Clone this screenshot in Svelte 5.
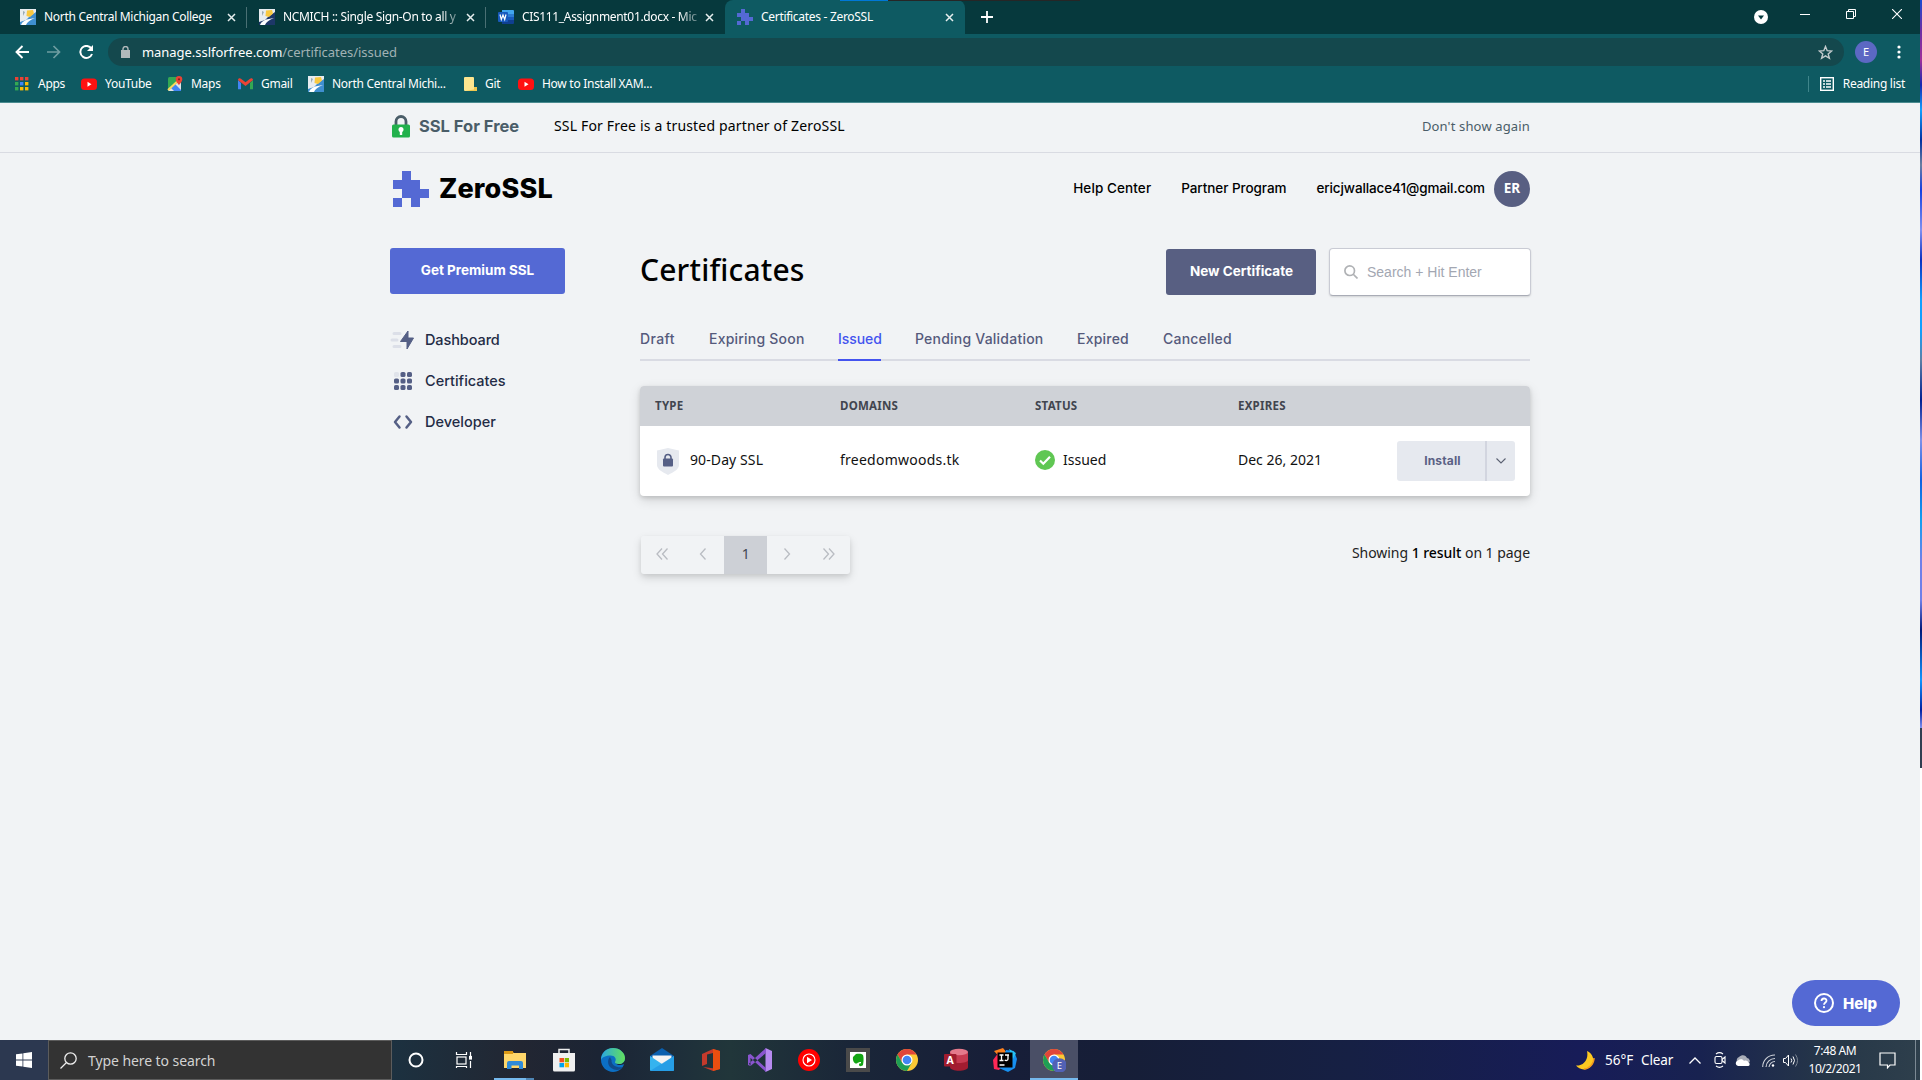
<script>
  const tabs = [
    { title: 'North Central Michigan College', icon: 'nc' },
    { title: 'NCMICH :: Single Sign-On to all y', icon: 'nc2' },
    { title: 'CIS111_Assignment01.docx - Mic', icon: 'word' },
    { title: 'Certificates - ZeroSSL', icon: 'zero', active: true }
  ];
  const bookmarks = [
    { label: 'Apps', icon: 'apps', w: 66 },
    { label: 'YouTube', icon: 'yt', w: 86 },
    { label: 'Maps', icon: 'maps', w: 71 },
    { label: 'Gmail', icon: 'gmail', w: 70 },
    { label: 'North Central Michi...', icon: 'nc', w: 156 },
    { label: 'Git', icon: 'folder', w: 54 },
    { label: 'How to Install XAM...', icon: 'yt', w: 150 }
  ];
  const filters = [
    { label: 'Draft', w: 35 },
    { label: 'Expiring Soon', w: 95 },
    { label: 'Issued', w: 43, active: true },
    { label: 'Pending Validation', w: 128 },
    { label: 'Expired', w: 52 },
    { label: 'Cancelled', w: 69 }
  ];
  const apps = ['cortana', 'tasks', 'explorer', 'store', 'edge', 'mail', 'office', 'vs', 'ytm', 'evernote', 'chrome', 'access', 'ij', 'chromeE'];
  const appColors = ['#ea4335', '#ea4335', '#ea4335', '#34a853', '#4285f4', '#fbbc05', '#34a853', '#fbbc05', '#fbbc05'];
</script>

{#snippet icon(name)}
  {#if name === 'nc' || name === 'nc2'}
    <svg width="16" height="16" viewBox="0 0 16 16"><rect width="16" height="16" fill={name === 'nc' ? '#3f8fd0' : '#1d3768'} /><path d="M0 0h16v3L9 8l-3 3-6 2z" fill="#e7ecf0" /><path d="M7 1.500l6-.5 1 3.500L10 8 6.500 7z" fill="#f8c840" /><path d="M1 16c1-3 3-4 6-5.500l8-1.500c-5 2-8 4-9 7z" fill="#fff" /><path d="M3 2l2 1-2 4z" fill="#9aabb5" /></svg>
  {:else if name === 'word'}
    <svg width="16" height="16" viewBox="0 0 16 16"><path d="M4 1h11a1 1 0 0 1 1 1v3H4z" fill="#41a5ee" /><path d="M4 5h12v3H4z" fill="#2b7cd3" /><path d="M4 8h12v3H4z" fill="#185abd" /><path d="M4 11h12v3a1 1 0 0 1-1 1H4z" fill="#103f91" /><rect y="3" width="10" height="10" rx="1" fill="#185abd" /><path d="M2 5.500l1.300 5L5 6l1.700 4.500 1.300-5" fill="none" stroke="#fff" stroke-width="1.200" /></svg>
  {:else if name === 'zero'}
    <svg width="16" height="16" viewBox="0 0 4 4" shape-rendering="crispEdges"><path d="M1 0h1v1h1v1h1v1H3v1H2V3H1V2H0V1h1zM0 3h1v1H0z" fill="#5469d4" /></svg>
  {:else if name === 'apps'}
    <svg width="14" height="14" viewBox="0 0 14 14">{#each appColors as c, i}<rect x={(i % 3) * 5} y={Math.floor(i / 3) * 5} width="3.400" height="3.400" fill={c} />{/each}</svg>
  {:else if name === 'yt'}
    <svg width="16" height="16" viewBox="0 0 16 16"><rect y="2.500" width="16" height="11.500" rx="3.500" fill="#f11" /><path d="M6.500 5.800v5l4-2.500z" fill="#fff" /></svg>
  {:else if name === 'maps'}
    <svg width="16" height="16" viewBox="0 0 16 16"><rect x="1" y="1" width="13" height="14" rx="1.500" fill="#34a853" /><path d="M1 15L14 3v12z" fill="#dfe3e6" /><path d="M8 8l6 6v1H7L4 12z" fill="#4285f4" /><path d="M1 14L13 3" stroke="#fbd75b" stroke-width="2" /><path d="M12 0a3.300 3.300 0 0 1 3.300 3.300C15.300 6 12 9 12 9S8.700 6 8.700 3.300A3.300 3.300 0 0 1 12 0z" fill="#ea4335" /><circle cx="12" cy="3.300" r="1.100" fill="#8c1d18" /></svg>
  {:else if name === 'gmail'}
    <svg width="15" height="12" viewBox="0 0 15 12"><path d="M0 2v9.200h3V5z" fill="#4285f4" /><path d="M15 2v9.200h-3V5z" fill="#34a853" /><path d="M0 2c0-2 2-2.200 3-1.300l4.500 3.600L12 .700c1-.900 3-.700 3 1.300l-7.500 6z" fill="#ea4335" /></svg>
  {:else if name === 'folder'}
    <svg width="13" height="16" viewBox="0 0 13 16"><path d="M1 1h8a1 1 0 0 1 1 1v9h2v4H1a1 1 0 0 1-1-1V2a1 1 0 0 1 1-1z" fill="#fde68f" /><path d="M1 15h12v-4h-3v2.500" fill="#efc84f" /></svg>
  {:else if name === 'cortana'}
    <svg width="24" height="24" viewBox="0 0 24 24"><circle cx="12" cy="12" r="6.500" fill="none" stroke="#fff" stroke-width="2" /></svg>
  {:else if name === 'tasks'}
    <svg width="24" height="24" viewBox="0 0 24 24" fill="none" stroke="#fff" stroke-width="1.200"><rect x="5" y="9" width="9" height="7" /><path d="M4.500 4v2.500h10V4M4.500 20v-1.500h10V20M18.500 4v4M18.500 13v7" /><rect x="17.600" y="8.500" width="1.800" height="2.500" fill="#fff" /></svg>
  {:else if name === 'explorer'}
    <svg width="24" height="24" viewBox="0 0 24 24"><path d="M1 3h8l2 2H1z" fill="#e8a317" /><path d="M1 5h22v15H1z" fill="#ffd76a" /><path d="M1 3h9v3H1z" fill="#dc9a16" /><path d="M4 21v-6a2 2 0 0 1 2-2h12a2 2 0 0 1 2 2v6h-4v-3.500H8.500V21z" fill="#2f8bd8" /></svg>
  {:else if name === 'store'}
    <svg width="24" height="24" viewBox="0 0 24 24"><path d="M7 7V1.500h10V7" fill="none" stroke="#eee" stroke-width="1.500" /><path d="M1 5h22v17a1.500 1.500 0 0 1-1.500 1.500h-19A1.500 1.500 0 0 1 1 22z" fill="#f0f0f0" /><path d="M7.500 10H12v4.300H7.500z" fill="#f25022" /><path d="M12.700 10H17v4.300h-4.300z" fill="#7fba00" /><path d="M7.500 15H12v4.300H7.500z" fill="#00a4ef" /><path d="M12.700 15H17v4.300h-4.300z" fill="#ffb900" /></svg>
  {:else if name === 'edge'}
    <svg width="24" height="24" viewBox="0 0 24 24"><defs><linearGradient id="eg" x1="0" x2="1"><stop stop-color="#2aa7e0" /><stop offset="1" stop-color="#63e05c" /></linearGradient></defs><path d="M0 12C0 5 5 0 12 0s12 5 12 10c0 4-3 6-6 6-2 0-4-.6-4-1.500 2 3 6 3.300 9 1.500-1 4-5 8-11 8S0 19 0 12z" fill="#0c6fc4" /><path d="M0 12C0 5 5 0 12 0s12 5 12 10c0 4-3 6-6 6-2.500 0-4.500-.800-4-2 2-3 0-6.500-4.500-6.500C5 7.500 1 9 0 12z" fill="url(#eg)" /><path d="M9 9c-3 3-3 10 4 12.500 4 1 7 0 8.500-2.500C17 20 10 18 10.500 12z" fill="#114a8b" /></svg>
  {:else if name === 'mail'}
    <svg width="24" height="24" viewBox="0 0 24 24"><path d="M0 8l12-8 12 8v6H0z" fill="#0a5fae" /><path d="M2.500 7.500h19V16h-19z" fill="#f3f3f3" /><path d="M0 8l12 8 12-8v14a1 1 0 0 1-1 1H1a1 1 0 0 1-1-1z" fill="#35b3ef" /><path d="M0 23L24 8v15z" fill="#1d8fe0" opacity=".6" /></svg>
  {:else if name === 'office'}
    <svg width="24" height="24" viewBox="0 0 24 24"><path d="M3 6l11-5 7 2v18l-7 2-10-4 10 1.300V5L8 6.500V16l-5 2z" fill="#c43a2c" /><path d="M14 1l7 2v18l-7 2z" fill="#ea4e10" /></svg>
  {:else if name === 'vs'}
    <svg width="24" height="24" viewBox="0 0 24 24"><path d="M17.500 0L24 3v18l-6.500 3z" fill="#b78af0" /><path d="M2.500 6L18 20v4L1 8.500zM2.500 18L18 5V0L1 15.500zM0 7l2.500-1v12L0 17z" fill="#8a55cf" /></svg>
  {:else if name === 'ytm'}
    <svg width="24" height="24" viewBox="0 0 24 24"><circle cx="12" cy="12" r="11" fill="#f00" /><circle cx="12" cy="12" r="6" fill="none" stroke="#fff" stroke-width="1.100" /><path d="M10 8.700v6.600l5-3.300z" fill="#fff" /></svg>
  {:else if name === 'evernote'}
    <svg width="24" height="24" viewBox="0 0 24 24"><path d="M0 0h24v24H0z" fill="#4a4a4a" /><path d="M4 4h16v16H4z" fill="#fff" /><path d="M7 9l3-3c3-.5 6-.3 7 1 1 3 .5 8 0 10-1 1.500-4 1.500-4 0 0-1.500 1-2 2-1.500V14c-2 0-3 .5-4 1.500-3 .5-4.500-3-4-6.500z" fill="#14a514" /></svg>
  {:else if name === 'chrome' || name === 'chromeE'}
    <svg width="24" height="24" viewBox="0 0 24 24"><circle cx="12" cy="12" r="11" fill="#fcc934" /><path d="M2.500 6.500A11 11 0 0 1 21.500 6.500H12L7.200 14.800z" fill="#e0463a" /><path d="M2.500 6.500A11 11 0 0 0 12 23l4.800-8.200-9.600 0z" fill="#1e9e55" /><circle cx="12" cy="12" r="5.500" fill="#fff" /><circle cx="12" cy="12" r="4.300" fill="#4285f4" />{#if name === 'chromeE'}<circle cx="17.500" cy="17.500" r="7.300" fill="#5261b5" /><text x="17.500" y="21" font-size="9.500" fill="#fff" text-anchor="middle">E</text>{/if}</svg>
  {:else if name === 'access'}
    <svg width="24" height="24" viewBox="0 0 24 24"><path d="M6 4v15c0 5 18 5 18 0V4z" fill="#a31c30" /><path d="M6 4v8c0 4 18 4 18 0V4z" fill="#c73a50" /><ellipse cx="15" cy="4" rx="9" ry="3.200" fill="#e5798b" /><rect y="6" width="12.500" height="12.500" rx="1" fill="#a11c2e" /><text x="6.200" y="16" font-size="10.500" font-weight="700" fill="#fff" text-anchor="middle">A</text></svg>
  {:else if name === 'ij'}
    <svg width="24" height="24" viewBox="0 0 24 24"><path d="M1 3l9-3 4 5-4 8z" fill="#fc801d" /><path d="M0 12l6-8 5 12-5 6-5-1z" fill="#fe2857" /><path d="M13 2l8 1 3 8-2 9-7 4-9-4z" fill="#1790f0" /><path d="M16 1l7 4-3 6z" fill="#26c3f5" /><rect x="4.500" y="4.500" width="15" height="15" fill="#000" /><path d="M6.500 7h4M8.500 7v5.500M6.500 12.500h4M12 7h4M15 7v4c0 1.500-2 2-3.300 1M6.500 17h5" stroke="#fff" stroke-width="1.300" fill="none" /></svg>
  {/if}
{/snippet}

{#snippet close()}
  <svg class="close" width="9" height="9" viewBox="0 0 9 9"><path d="M1 1l7 7M8 1L1 8" stroke="#e6eeee" stroke-width="1.500" /></svg>
{/snippet}

<div class="screen">
  <div class="window">
    <header class="browser">
      <div class="tabstrip">
        {#each tabs as t}
          <div class="tab {t.icon}" class:active={t.active}>
            {@render icon(t.icon)}
            <span class="title">{t.title}</span>
            {@render close()}
          </div>
        {/each}
        <svg class="plus" width="12" height="12" viewBox="0 0 12 12"><path d="M6 0v12M0 6h12" stroke="#fff" stroke-width="1.800" /></svg>
        <div class="controls">
          <svg width="14" height="14" viewBox="0 0 14 14"><circle cx="7" cy="7" r="7" fill="#fff" /><path d="M4 5.500h6L7 9.500z" fill="#06393d" /></svg>
          <svg width="10" height="10" viewBox="0 0 10 10"><path d="M0 5.500h10" stroke="#fff" /></svg>
          <svg width="10" height="10" viewBox="0 0 10 10" fill="none" stroke="#fff"><path d="M.500 2.500h7v7h-7zM2.500 2V.500h7v7H8" /></svg>
          <svg width="10" height="10" viewBox="0 0 10 10"><path d="M0 0l10 10M10 0L0 10" stroke="#fff" stroke-width="1.100" /></svg>
        </div>
      </div>
      <div class="toolbar">
        <svg width="14" height="14" viewBox="0 0 14 14" fill="none" stroke="#fff" stroke-width="1.900"><path d="M14 7H1.500M7.500 1L1.500 7l6 6" /></svg>
        <svg width="14" height="14" viewBox="0 0 14 14" fill="none" stroke="#6f9da1" stroke-width="1.700"><path d="M0 7h12.500M6.500 1l6 6-6 6" /></svg>
        <svg width="15" height="14" viewBox="0 0 15 14"><path d="M12.500 3.800A6 6 0 1 0 13 9" fill="none" stroke="#fff" stroke-width="2" /><path d="M14 0v6H8z" fill="#fff" /></svg>
        <div class="omnibox">
          <svg width="9" height="12" viewBox="0 0 9 12"><path d="M0 4h9v8H0z" fill="#b1b9bb" /><path d="M2 5V3a2.500 2.500 0 0 1 5 0v2" fill="none" stroke="#b1b9bb" stroke-width="1.400" /></svg>
          <span class="url">manage.sslforfree.com<i>/certificates/issued</i></span>
          <svg class="star" width="15" height="15" viewBox="0 0 15 15"><path d="M7.500 1.500l1.700 4.200 4.500.300-3.500 2.900 1.200 4.400-3.900-2.500-3.900 2.500 1.200-4.400L1.300 6l4.500-.300z" fill="none" stroke="#c3cbcd" stroke-width="1.400" /></svg>
        </div>
        <div class="profile">E</div>
        <svg width="4" height="14" viewBox="0 0 4 14" fill="#fff"><circle cx="2" cy="2" r="1.600" /><circle cx="2" cy="7" r="1.600" /><circle cx="2" cy="12" r="1.600" /></svg>
      </div>
      <div class="bookmarks">
        {#each bookmarks as b}
          <div class="bookmark" style:width="{b.w}px">{@render icon(b.icon)}<span>{b.label}</span></div>
        {/each}
        <div class="reading">
          <svg width="14" height="14" viewBox="0 0 14 14"><rect x=".7" y=".7" width="12.600" height="12.600" fill="none" stroke="#fff" stroke-width="1.400" /><path d="M3 4h2M3 7h2M3 10h2M6 4h5M6 7h5M6 10h5" stroke="#fff" stroke-width="1.600" /></svg>
          <span>Reading list</span>
        </div>
      </div>
    </header>

    <div class="partner">
      <div class="container">
        <svg width="18" height="23" viewBox="0 0 18 23"><path d="M4 11V6.500a5 5 0 0 1 10 0V11" fill="none" stroke="#4a5d68" stroke-width="2.800" /><rect y="9.500" width="18" height="13" rx="1.500" fill="#22b14c" /><circle cx="9" cy="14.500" r="2.500" fill="#fff" /><path d="M7.800 15h2.400v5H7.800z" fill="#fff" /></svg>
        <b>SSL For Free</b>
        <span class="msg">SSL For Free is a trusted partner of ZeroSSL</span>
        <span class="dismiss">Don't show again</span>
      </div>
    </div>

    <div class="container top">
      <svg width="36" height="36" viewBox="0 0 4 4" shape-rendering="crispEdges"><path d="M1 0h1v1h1v1h1v1H3v1H2V3H1V2H0V1h1zM0 3h1v1H0z" fill="#5469d4" /></svg>
      <span class="brand">ZeroSSL</span>
      <nav>
        <span class="help-center">Help Center</span>
        <span class="program">Partner Program</span>
        <span class="email">ericjwallace41@gmail.com</span>
        <span class="avatar">ER</span>
      </nav>
    </div>

    <div class="container body">
      <aside>
        <button class="premium">Get Premium SSL</button>
        <div class="side">
          <svg width="25" height="20" viewBox="0 0 25 20"><path d="M4 3.500h6M2 10h5M4 16.500h6" stroke="#dcdfe8" stroke-width="3" stroke-linecap="round" /><path d="M18 1v7h5.500L17 19v-7.500h-6.500z" fill="#555f85" stroke="#555f85" stroke-linejoin="round" /></svg>
          <span>Dashboard</span>
        </div>
        <div class="side">
          <svg width="25" height="20" viewBox="0 0 25 20">{#each Array(9) as _, i}<rect x={4 + (i % 3) * 6.500} y={1 + Math.floor(i / 3) * 6.500} width="5" height="5" rx="1.600" fill={i ? '#555f85' : '#e0e3ea'} />{/each}</svg>
          <span>Certificates</span>
        </div>
        <div class="side">
          <svg width="25" height="20" viewBox="0 0 25 20"><path d="M9.500 4.500L5 10l4.500 5.500M16.500 4.500L21 10l-4.500 5.500" fill="none" stroke="#555f85" stroke-width="2.500" stroke-linecap="round" stroke-linejoin="round" /></svg>
          <span>Developer</span>
        </div>
      </aside>

      <main>
        <div class="head">
          <h1>Certificates</h1>
          <button class="new">New Certificate</button>
          <div class="search">
            <svg width="14" height="14" viewBox="0 0 14 14" fill="none" stroke="#b0b2b5" stroke-width="1.700"><circle cx="5.700" cy="5.700" r="4.800" /><path d="M9 9l4.500 4.500" /></svg>
            <span>Search + Hit Enter</span>
          </div>
        </div>
        <div class="filters">
          {#each filters as f}
            <div class="filter" class:active={f.active} style:width="{f.w}px">{f.label}</div>
          {/each}
        </div>
        <div class="table">
          <div class="row thead"><span>TYPE</span><span>DOMAINS</span><span>STATUS</span><span>EXPIRES</span></div>
          <div class="row entry">
            <span class="cell">
              <svg class="shield" width="22" height="27" viewBox="0 0 22 27"><path d="M11 0l11 2.500V17c0 4-5 7-11 10C5 24 0 21 0 17V2.500z" fill="#e6e9ef" /><rect x="6" y="10.500" width="10" height="8" rx="1" fill="#555f85" /><path d="M8 11V9.500a3 3 0 0 1 6 0V11" fill="none" stroke="#555f85" stroke-width="1.600" /></svg>
              <span class="kind">90-Day SSL</span>
            </span>
            <span class="cell domain">freedomwoods.tk</span>
            <span class="cell">
              <svg class="check" width="20" height="20" viewBox="0 0 20 20"><circle cx="10" cy="10" r="10" fill="#60c753" /><path d="M5 10.500l3.300 3.300L15 6.800" fill="none" stroke="#fff" stroke-width="2.200" /></svg>
              <span class="state">Issued</span>
            </span>
            <span class="cell date">Dec 26, 2021</span>
            <span class="actions"><span class="install">Install</span><span class="drop"><svg width="10" height="6" viewBox="0 0 10 6"><path d="M.5.500L5 5 9.500.500" fill="none" stroke="#5c6273" stroke-width="1.100" /></svg></span></span>
          </div>
        </div>
        <div class="footer">
          <div class="pages">
            <span><svg width="12" height="12" viewBox="0 0 12 12"><path d="M6 .500L1 6l5 5.500M11.500.500l-5 5.500 5 5.500" /></svg></span>
            <span><svg width="12" height="12" viewBox="0 0 12 12"><path d="M8.500.500L3.500 6l5 5.500" /></svg></span>
            <span class="current">1</span>
            <span><svg width="12" height="12" viewBox="0 0 12 12"><path d="M3.500.500l5 5.500-5 5.500" /></svg></span>
            <span><svg width="12" height="12" viewBox="0 0 12 12"><path d="M.500.500l5 5.500-5 5.500M6 .500L11 6l-5 5.500" /></svg></span>
          </div>
          <div class="count">Showing <b>1 result</b> on 1 page</div>
        </div>
      </main>
    </div>

    <div class="helper">
      <svg width="20" height="20" viewBox="0 0 20 20"><circle cx="10" cy="10" r="9" fill="none" stroke="#fff" stroke-width="2" /><path d="M7.500 8c0-3.300 5-3.300 5-.3 0 1.800-2.500 1.800-2.500 4" fill="none" stroke="#fff" stroke-width="1.800" /><circle cx="10" cy="14.200" r="1.100" fill="#fff" /></svg>
      <span>Help</span>
    </div>
    <div class="accent"></div>

    <footer class="taskbar">
      <div class="start"><svg width="16" height="16" viewBox="0 0 16 16" fill="#fff"><path d="M0 2.300l6.500-.9v6.200H0zM7.300 1.300L16 0v7.600H7.300zM0 8.400h6.500v6.200L0 13.700zM7.300 8.400H16V16l-8.700-1.300z" /></svg></div>
      <div class="find"><svg width="17" height="17" viewBox="0 0 17 17" fill="none" stroke="#eee" stroke-width="1.300"><circle cx="10.500" cy="6.500" r="5.700" /><path d="M6.500 10.500L.5 16.500" /></svg><span>Type here to search</span></div>
      {#each apps as a}
        <div class="app {a}">{@render icon(a)}</div>
      {/each}
      <div class="tray">
        <svg class="moon" width="19" height="19" viewBox="0 0 19 19"><path d="M11 0a9.500 9.500 0 1 1-11 14.500C7 15 13 9 11 0z" fill="#fdc921" /><path d="M18 7c0 6-5 11-10 11" stroke="#f29a1f" stroke-width="1.500" fill="none" /></svg>
        <span class="temp">56°F</span>
        <span class="sky">Clear</span>
        <svg class="up" width="12" height="7" viewBox="0 0 12 7"><path d="M.500 6.500L6 1l5.500 5.500" fill="none" stroke="#fff" stroke-width="1.300" /></svg>
        <svg class="meet" width="12" height="16" viewBox="0 0 12 16" fill="none" stroke="#fff" stroke-width="1.100"><rect x="1" y="4.500" width="7" height="7" rx="1.500" /><path d="M8 7.500L11 5v6L8 8.500M2 2c2-1.500 5-1.500 7 0M2 14c2 1.500 5 1.500 7 0" /></svg>
        <svg class="cloud" width="16" height="11" viewBox="0 0 16 11"><path d="M3 8a3.500 3.500 0 0 1 1-6c3-3 7-2 8 1a3 3 0 0 1 2 5z" fill="#a9adb8" /><path d="M3 11a2.800 2.800 0 0 1 0-5.500c2-2 5-1.500 6 .5 2-1 4 0 4.300 1.500a1.800 1.800 0 0 1 0 3.500z" fill="#fff" /></svg>
        <svg class="wifi" width="13" height="13" viewBox="0 0 13 13" fill="none" stroke="#cfd3da" stroke-width="1.100"><path d="M.700 13A12 12 0 0 1 13 1M4 13a9 9 0 0 1 9-8.500M7 13a6 6 0 0 1 6-5.500" /><circle cx="11" cy="11.500" r="1.200" fill="#fff" stroke="none" /></svg>
        <svg class="volume" width="16" height="13" viewBox="0 0 16 13" fill="none" stroke="#fff"><path d="M.500 4.500h2l3-3.500v11l-3-3.500h-2zM8 4.500q1.500 2 0 4M10 2.500q3 4 0 8" /><path d="M12.500.500q4 6 0 12" stroke="#7d8794" /></svg>
        <div class="clock"><span>7:48 AM</span><span class="day">10/2/2021</span></div>
        <svg class="notes" width="17" height="17" viewBox="0 0 17 17" fill="none" stroke="#fff" stroke-width="1.200"><path d="M1 1h15v12h-5l-2.500 2.800V13H1z" /></svg>
      </div>
      <div class="peek"></div>
    </footer>
  </div>
  <div class="edge-strip"><div class="glow"></div><div class="dark"></div></div>
</div>

<style>
  :global(body) { margin: 0; overflow: hidden; }
  * { box-sizing: border-box; }
  svg { display: block; flex: none; }
  button { border: 0; padding: 0; }
  .screen { display: flex; width: 1922px; height: 1080px; background: #fff; font-family: 'Noto Sans', sans-serif; white-space: nowrap; overflow: hidden; }
  .window { position: relative; display: flex; flex-direction: column; width: 1920px; height: 1080px; background: #f1f3f5; }
  .edge-strip { width: 2px; }
  .glow { height: 728px; background: linear-gradient(#1b4ad0, #6a2fa5 30px, #a02f9a 60px, #1428b0 85px, #12a0ff 110px, #0030a0 140px, #6b7fa0 165px, #1540e0 190px, #8090f0 230px, #0a30c0 260px, #10a0ff 300px, #10a0ff 330px, #5d80a5 360px, #002090 400px, #7e90e8 440px, #1060e0 480px, #10a0f0 520px, #7080e8 560px, #7080e8 600px, #001878 630px, #1095ff 680px, #0020a0 710px, #8090f0); }
  .dark { height: 40px; background: #303e50; }

  .browser { height: 103px; background: #0e5a62; border-bottom: 1px solid #4a8b90; color: #fff; }
  .tabstrip { display: flex; height: 34px; padding-left: 8px; background: #06393d; }
  .tab { display: flex; align-items: center; width: 239px; padding: 0 10px 0 12px; border-right: 1px solid #3d666a; border-image: linear-gradient(transparent 8px, #4a7074 8px, #4a7074 27px, transparent 27px) 1; }
  .tab.nc { padding-right: 10px; }
  .tab.word { border-right-color: transparent; border-image: none; }
  .tab.active { width: 240px; padding-right: 11px; background: #0e5a62; border: 0; border-image: none; border-radius: 8px 8px 0 0; }
  .title { flex: 1; margin: -2px 8px 0 8px; font-size: 12px; letter-spacing: -0.3px; }
  .tab.nc2 .title, .tab.word .title { letter-spacing: -0.33px; -webkit-mask-image: linear-gradient(90deg, #000 90%, #0005); mask-image: linear-gradient(90deg, #000 90%, #0005); }
  .plus { align-self: center; margin-left: 16px; }
  .controls { display: flex; align-items: center; margin: -6px 18px 0 auto; gap: 36px; }
  .controls svg:first-child { position: relative; top: 3px; margin-right: -4px; }
  .toolbar { display: flex; align-items: center; height: 36px; padding-left: 15px; }
  .toolbar > svg:nth-child(2) { margin-left: 18px; }
  .toolbar > svg:nth-child(3) { margin: 0 14px 0 18px; }
  .omnibox { display: flex; align-items: center; width: 1736px; height: 28px; padding: 0 11px 0 13px; border-radius: 14px; background: #14484d; }
  .url { margin-left: 12px; font-size: 13px; letter-spacing: -0.04px; }
  .url i { color: #a0b2b4; font-style: normal; }
  .star { margin-left: auto; }
  .profile { width: 22px; height: 22px; margin: 0 20px 0 11px; border-radius: 50%; background: #5c68c3; font-size: 11px; line-height: 22px; text-align: center; }
  .bookmarks { display: flex; align-items: center; height: 28px; padding-left: 15px; font-size: 12px; letter-spacing: -0.28px; }
  .bookmark { display: flex; align-items: center; gap: 8px; }
  .bookmark:first-child { gap: 9px; }
  .bookmark span, .reading span { margin-top: -1px; }
  .reading { display: flex; align-items: center; gap: 9px; height: 16px; margin: 0 15px 0 auto; padding-left: 11px; border-left: 1px solid #3f858b; }

  .container { display: flex; width: 1140px; margin: 0 auto; }
  .partner { height: 50px; border-bottom: 1px solid #d9dbe2; }
  .partner .container { height: 46px; align-items: center; padding-left: 2px; }
  .partner b { width: 135px; margin-left: 9px; color: #4a5d68; font: 700 16.5px Inter, sans-serif; }
  .msg { margin-top: -1px; color: #000; font-size: 14px; letter-spacing: 0.17px; }
  .dismiss { margin-top: -1px; margin-left: auto; color: #4a5d68; font-size: 13px; letter-spacing: 0.15px; }
  .top { align-items: center; height: 71px; padding-left: 3px; }
  .brand { margin: -1px 0 0 10px; font: 800 27px Inter, sans-serif; letter-spacing: 0.15px; }
  nav { display: flex; align-items: center; margin-left: auto; font: 500 13.5px Inter, sans-serif; }
  nav span:not(.avatar) { margin-top: -2px; }
  .help-center { letter-spacing: 0.1px; }
  nav .program { margin: 0 30px; letter-spacing: -0.06px; }
  .email { letter-spacing: -0.11px; }
  .avatar { width: 36px; height: 36px; margin-left: 9px; border-radius: 50%; background: #585f82; color: #fff; font: 700 13.5px/35px 'Noto Sans', sans-serif; text-align: center; }
  .body { padding-top: 24px; }
  aside { width: 250px; }
  .premium { width: 175px; height: 46px; margin-bottom: 25px; padding-bottom: 2px; border-radius: 3px; background: #5469d4; color: #fff; font: 700 13.5px Inter, sans-serif; }
  .side { display: flex; align-items: center; gap: 10px; height: 41px; color: #232b45; font: 500 14.5px Inter, sans-serif; }
  .side:nth-child(2) span { letter-spacing: -0.1px; }
  main { width: 890px; }
  .head { display: flex; margin-right: -1px; }
  h1 { flex: 1; margin: 0; color: #000; font-size: 30px; font-weight: 500; line-height: 43px; letter-spacing: 0.17px; }
  .new { width: 150px; height: 46px; margin: 1px 13px 0 0; padding: 0 0 2px 1px; border-radius: 3px; background: #585f82; color: #fff; font: 700 13.5px Inter, sans-serif; }
  .search { display: flex; align-items: center; width: 202px; height: 48px; padding-left: 14px; border: 1px solid #c9cbd4; border-bottom-color: #a9acb6; border-radius: 4px; background: #fff; box-shadow: 0 1px 2px #0002; }
  .search span { margin-left: 9px; color: #a3a7b2; font: 14px 'Liberation Sans', sans-serif; }
  .filters { display: flex; gap: 34px; height: 65px; border-bottom: 2px solid #d9dbe3; }
  .filter { height: 65px; padding-top: 33px; color: #555a7c; font: 500 14px/20px Inter, sans-serif; letter-spacing: 0.22px; }
  .filter:first-child { letter-spacing: 0.4px; }
  .filter.active { border-bottom: 2px solid #4353ef; color: #4353ef; letter-spacing: -0.05px; }
  .table { margin-top: 25px; border-radius: 4px; background: #fff; box-shadow: 0 4px 12px #0002, 0 2px 4px #0002; overflow: hidden; }
  .row { display: grid; grid-template-columns: 185px 195px 203px 159px 118px; align-items: center; padding: 0 15px; }
  .thead { height: 40px; padding-bottom: 2px; background: #cfd2d7; color: #41454f; font-size: 11.5px; font-weight: 700; letter-spacing: 0.24px; }
  .entry { height: 70px; color: #111; font-size: 14px; }
  .cell { display: flex; align-items: center; padding-bottom: 2px; }
  .cell span, .date { margin-top: -2px; }
  .domain { margin-top: -2px; letter-spacing: 0.25px; }
  .kind { letter-spacing: 0.1px; }
  .shield { margin: 2px 11px 0 2px; }
  .check { margin-right: 8px; }
  .actions { display: flex; width: 118px; height: 40px; border-radius: 3px; background: #e6e9ef; }
  .install { width: 88px; color: #5a6185; font: 700 12px/40px Inter, sans-serif; letter-spacing: 0.15px; text-align: center; padding-left: 3px; }
  .drop { display: flex; flex: 1; align-items: center; justify-content: center; border-left: 2px solid #d2d5df; }
  .footer { display: flex; justify-content: space-between; margin-top: 40px; padding-left: 1px; }
  .pages { display: flex; width: 209px; height: 38px; border-radius: 3px; box-shadow: 0 4px 10px #0002, 0 2px 4px #0001; }
  .pages span { display: flex; align-items: center; justify-content: center; width: 41.500px; padding: 0 1px 2px 0; }
  .pages span:first-child { width: 42px; padding-right: 0; }
  .pages .current { width: 43px; padding: 0 0 3px; background: #cdd0d6; color: #41454f; font-size: 14px; }
  .pages path { fill: none; stroke: #b9bcc2; stroke-width: 1.300; }
  .count { color: #222; font-size: 14px; line-height: 34px; letter-spacing: -0.04px; }
  .count b { color: #000; font-weight: 500; }

  .helper { position: absolute; right: 20px; bottom: 54px; display: flex; align-items: center; width: 108px; height: 46px; padding-left: 22px; border-radius: 23px; background: #5469d4; color: #fff; }
  .helper span { margin-left: 9px; font: 800 15px Inter, sans-serif; }
  .accent { position: absolute; top: 0; left: 840px; width: 240px; height: 1px; background: linear-gradient(90deg, #0078d7 48px, #262626 48px); }

  .taskbar { display: flex; height: 40px; margin-top: auto; background: linear-gradient(90deg, #2c3850 0, #2c3850 48px, #1c3140 392px, #222632 520px, #1b2434 600px, #1d2c3a 660px, #21363a 730px, #1a2638 850px, #171e38 1000px, #161e37 1120px, #162044 1350px, #171c58 1580px, #182250 1700px, #263748 1830px, #2e3f4c 1920px); color: #fff; }
  .start { display: flex; width: 48px; align-items: center; justify-content: center; }
  .find { display: flex; align-items: center; width: 344px; padding-left: 11px; border: 1px solid #5c5c5c; background: #333; }
  .find span { margin-left: 11px; color: #d2d2d2; font-size: 14px; letter-spacing: -0.08px; }
  .app { display: flex; align-items: center; justify-content: center; width: 49px; }
  .app.cortana { width: 48px; }
  .app.tasks { padding-right: 2px; }
  .app.explorer { margin-left: 1px; background: linear-gradient(90deg, #76b9ed 32px, #4f86b5 32px) 4px 38px / 40px 2px no-repeat; }
  .app.chromeE { width: 48px; margin-left: 1px; border-bottom: 2px solid #76b9ed; background: #4a4f66; padding-top: 2px; }
  .tray { display: flex; align-items: center; margin-left: auto; font-size: 13.5px; }
  .temp { width: 36px; margin-left: 10px; }
  .sky { width: 48px; letter-spacing: -0.1px; }
  .meet { margin-left: 13px; }
  .cloud { margin-left: 9px; }
  .wifi { margin-left: 11px; }
  .volume { margin-left: 8px; }
  .clock { display: flex; flex-direction: column; width: 62px; margin-left: 5px; font-size: 12px; line-height: 18px; text-align: center; letter-spacing: -0.450px; }
  .notes { margin: 0 19px 0 13px; }
  .peek { width: 5px; border-left: 1px solid #7c8994; }
</style>
